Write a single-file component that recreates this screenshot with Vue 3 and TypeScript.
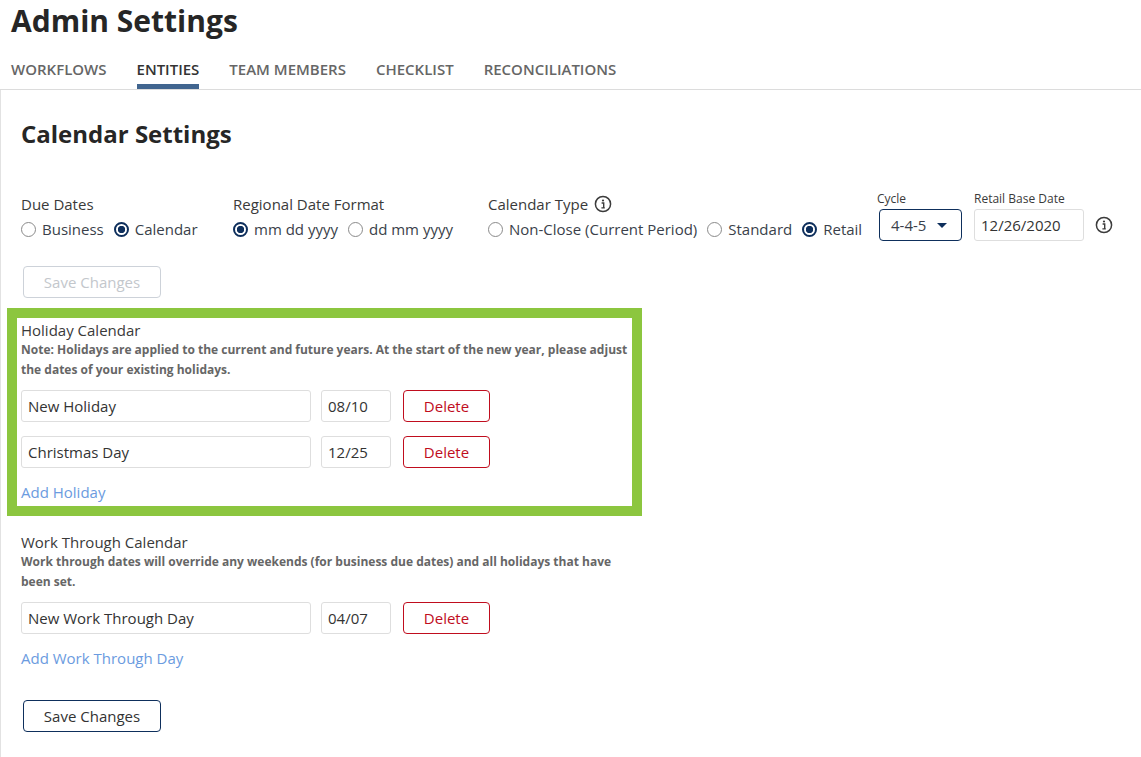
<script setup lang="ts">
interface Opt { label: string; on?: boolean }
interface Row { name: string; date: string }
const tabs: string[] = ['Workflows', 'Entities', 'Team Members', 'Checklist', 'Reconciliations']
const dueDates: Opt[] = [{ label: 'Business' }, { label: 'Calendar', on: true }]
const formats: Opt[] = [{ label: 'mm dd yyyy', on: true }, { label: 'dd mm yyyy' }]
const calTypes: Opt[] = [{ label: 'Non-Close (Current Period)' }, { label: 'Standard' }, { label: 'Retail', on: true }]
const holidays: Row[] = [{ name: 'New Holiday', date: '08/10' }, { name: 'Christmas Day', date: '12/25' }]
const workDays: Row[] = [{ name: 'New Work Through Day', date: '04/07' }]
</script>

<template>
  <div class="page">
    <header class="top">
      <h1 class="title">Admin Settings</h1>
      <nav class="tabs">
        <a v-for="t in tabs" :key="t" class="tab" :class="{ active: t === 'Entities' }">{{ t }}</a>
      </nav>
    </header>

    <main class="panel">
      <h2 class="heading">Calendar Settings</h2>

      <section class="settings">
        <div class="group due">
          <div class="label">Due Dates</div>
          <div class="radios">
            <span v-for="o in dueDates" :key="o.label" class="radio"><i class="dot" :class="{ on: o.on }"></i>{{ o.label }}</span>
          </div>
        </div>
        <div class="group region">
          <div class="label">Regional Date Format</div>
          <div class="radios">
            <span v-for="o in formats" :key="o.label" class="radio"><i class="dot" :class="{ on: o.on }"></i>{{ o.label }}</span>
          </div>
        </div>
        <div class="group type">
          <div class="label">Calendar Type
            <svg class="info" viewBox="0 0 18 18" width="18" height="18"><circle cx="9" cy="9" r="7.6" fill="none" stroke="#3c3c3c" stroke-width="1.5"/><circle cx="9" cy="5.5" r="1.1" fill="#3c3c3c"/><path d="M7.6 8h2.1v4.6M7.4 12.9h3.4" fill="none" stroke="#3c3c3c" stroke-width="1.4"/></svg>
          </div>
          <div class="radios">
            <span v-for="o in calTypes" :key="o.label" class="radio"><i class="dot" :class="{ on: o.on }"></i>{{ o.label }}</span>
          </div>
        </div>
        <div class="mini cycle">
          <div class="mini-label cycle-label">Cycle</div>
          <div class="select">4-4-5<i class="caret"></i></div>
        </div>
        <div class="mini base">
          <div class="mini-label">Retail Base Date</div>
          <div class="field base-field">12/26/2020</div>
        </div>
        <svg class="info side" viewBox="0 0 18 18" width="18" height="18"><circle cx="9" cy="9" r="7.6" fill="none" stroke="#3c3c3c" stroke-width="1.5"/><circle cx="9" cy="5.5" r="1.1" fill="#3c3c3c"/><path d="M7.6 8h2.1v4.6M7.4 12.9h3.4" fill="none" stroke="#3c3c3c" stroke-width="1.4"/></svg>
      </section>

      <button class="btn disabled">Save Changes</button>

      <section class="block highlighted">
        <div class="block-title">Holiday Calendar</div>
        <p class="note">Note: Holidays are applied to the current and future years. At the start of the new year, please adjust the dates of your existing holidays.</p>
        <div v-for="r in holidays" :key="r.name" class="row">
          <div class="field name">{{ r.name }}</div>
          <div class="field date">{{ r.date }}</div>
          <button class="delete">Delete</button>
        </div>
        <a class="add">Add Holiday</a>
      </section>

      <section class="block work">
        <div class="block-title">Work Through Calendar</div>
        <p class="note">Work through dates will override any weekends (for business due dates) and all holidays that have been set.</p>
        <div v-for="r in workDays" :key="r.name" class="row">
          <div class="field name">{{ r.name }}</div>
          <div class="field date">{{ r.date }}</div>
          <button class="delete">Delete</button>
        </div>
        <a class="add">Add Work Through Day</a>
      </section>

      <button class="btn primary">Save Changes</button>
    </main>
  </div>
</template>

<style>
html, body { margin: 0; background: #fff; }
</style>

<style scoped>
.page {
  width: 1141px;
  height: 757px;
  overflow: hidden;
  font-family: "Open Sans", "Liberation Sans", sans-serif;
  font-size: 15px;
  color: #333;
  background: #fff;
}
.top { border-bottom: 1px solid #dcdcdc; height: 89px; box-sizing: content-box; }
.title {
  margin: 0;
  padding: 2px 0 0 11px;
  font-size: 30px;
  line-height: 38px;
  font-weight: 700;
  color: #262626;
}
.tabs { display: flex; gap: 30px; padding: 17px 0 0 11px; }
.tab {
  height: 32px;
  line-height: 24px;
  box-sizing: border-box;
  font-size: 15px;
  font-weight: 600;
  text-transform: uppercase;
  color: #666;
}
.tab.active { color: #333; border-bottom: 5px solid #41658f; height: 32px; }
.panel {
  border-left: 1px solid #e2e2e2;
  padding: 28px 0 0 20px;
  height: 667px;
  box-sizing: border-box;
}
.heading {
  margin: 0;
  font-size: 24px;
  line-height: 32px;
  font-weight: 700;
  color: #262626;
}
.settings { display: flex; align-items: flex-start; margin-top: 41px; height: 75px; }
.group { display: flex; flex-direction: column; }
.due { width: 212px; }
.region { width: 255px; }
.type { width: 391px; }
.label {
  display: flex;
  align-items: center;
  gap: 6px;
  height: 24px;
  line-height: 24px;
  margin-top: 1px;
  color: #3a3a3a;
}
.radios { display: flex; gap: 10px; margin-top: 1px; height: 24px; }
.radio { display: inline-flex; align-items: center; gap: 6px; line-height: 24px; color: #3a3f4a; white-space: nowrap; }
.dot {
  width: 15px;
  height: 15px;
  box-sizing: border-box;
  border: 1.5px solid #8a8a8a;
  border-radius: 50%;
  background: #fff;
  display: inline-block;
}
.dot.on {
  border-color: #0e2f5c;
  border-width: 2px;
  background: radial-gradient(circle, #0e2f5c 0 3.4px, #fff 4px);
}
.mini { display: flex; flex-direction: column; }
.mini-label { font-size: 12px; line-height: 16px; color: #3a3a3a; height: 18px; }
.cycle-label { margin-left: -2px; }
.cycle { width: 95px; }
.base { width: 121px; }
.select {
  width: 83px;
  height: 32px;
  box-sizing: border-box;
  border: 1px solid #0e2f5c;
  border-radius: 4px;
  display: flex;
  align-items: center;
  justify-content: space-between;
  padding: 0 14px 0 11px;
  color: #3a3f4a;
}
.caret { width: 0; height: 0; border-left: 5px solid transparent; border-right: 5px solid transparent; border-top: 5px solid #0e2f5c; }
.field {
  height: 32px;
  box-sizing: border-box;
  border: 1px solid #dedede;
  border-radius: 3px;
  display: flex;
  align-items: center;
  padding: 0 6px;
  color: #333;
  background: #fff;
}
.base-field { width: 110px; }
.info { flex: none; }
.side { margin-top: 25px; }
.btn {
  display: block;
  width: 138px;
  height: 32px;
  margin: 0 0 0 2px;
  padding: 0;
  background: #fff;
  border-radius: 4px;
  font-family: inherit;
  font-size: 15px;
}
.disabled { border: 1px solid #cdd2d9; color: #c3c7cc; }
.primary { border: 1px solid #0e2f5c; color: #333; margin-top: 30px; }
.block { box-sizing: border-box; width: 635px; }
.highlighted {
  border: 10px solid #8cc63f;
  margin: 10px 0 0 -14px;
  height: 208px;
  padding: 2px 0 0 4px;
}
.work { margin-top: 16px; width: 615px; }
.block-title { line-height: 20px; height: 20px; color: #3a3a3a; }
.note {
  margin: 0;
  font-size: 12px;
  line-height: 20px;
  font-weight: 700;
  color: #666;
}
.row { display: flex; align-items: center; margin-top: 10px; height: 32px; }
.row + .row { margin-top: 14px; }
.name { width: 290px; }
.date { width: 70px; margin-left: 10px; }
.delete {
  width: 87px;
  height: 32px;
  margin-left: 12px;
  padding: 0;
  background: #fff;
  border: 1px solid #c00d1e;
  border-radius: 4px;
  color: #c00d1e;
  font-family: inherit;
  font-size: 15px;
}
.add { display: block; margin-top: 12px; line-height: 24px; color: #6b9be0; }
</style>
